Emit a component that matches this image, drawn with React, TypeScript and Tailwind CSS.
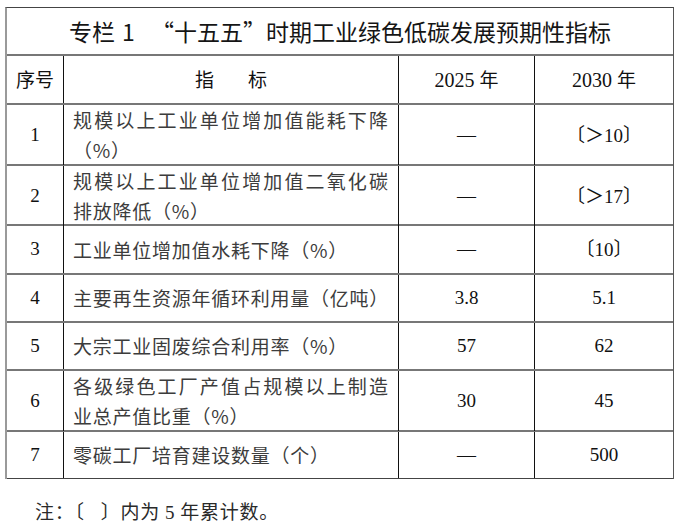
import React from 'react';

const CJK = "font-['Noto_Sans_CJK_SC',sans-serif]";
const SERIF = "font-['Liberation_Serif','Noto_Sans_CJK_SC',serif]";

type Row = {
  no: string;
  lines: string[];
  justifyFirst?: boolean;
  h: string;
  y2025: React.ReactNode;
  y2030: React.ReactNode;
};

const Dash = () => <span className={SERIF}>—</span>;

const Bracket = ({ children }: { children: React.ReactNode }) => (
  <span>
    <span className={CJK}>〔</span>
    {children}
    <span className={CJK}>〕</span>
  </span>
);

const ROWS: Row[] = [
  {
    no: '1',
    lines: ['规模以上工业单位增加值能耗下降', '（%）'],
    justifyFirst: true,
    h: 'h-[61px]',
    y2025: <Dash />,
    y2030: (
      <Bracket>
        <span className={CJK}>＞</span>10
      </Bracket>
    ),
  },
  {
    no: '2',
    lines: ['规模以上工业单位增加值二氧化碳', '排放降低（%）'],
    justifyFirst: true,
    h: 'h-[60px]',
    y2025: <Dash />,
    y2030: (
      <Bracket>
        <span className={CJK}>＞</span>17
      </Bracket>
    ),
  },
  {
    no: '3',
    lines: ['工业单位增加值水耗下降（%）'],
    h: 'h-[49px]',
    y2025: <Dash />,
    y2030: <Bracket>10</Bracket>,
  },
  {
    no: '4',
    lines: ['主要再生资源年循环利用量（亿吨）'],
    h: 'h-[48px]',
    y2025: '3.8',
    y2030: '5.1',
  },
  {
    no: '5',
    lines: ['大宗工业固废综合利用率（%）'],
    h: 'h-[48px]',
    y2025: '57',
    y2030: '62',
  },
  {
    no: '6',
    lines: ['各级绿色工厂产值占规模以上制造', '业总产值比重（%）'],
    justifyFirst: true,
    h: 'h-[61px]',
    y2025: '30',
    y2030: '45',
  },
  {
    no: '7',
    lines: ['零碳工厂培育建设数量（个）'],
    h: 'h-[47px]',
    y2025: <Dash />,
    y2030: '500',
  },
];

const GRID = 'grid grid-cols-[57px_335px_136px_138px]';

export default function App() {
  return (
    <div className="w-[680px] h-[529px] bg-white pt-[7px] pl-[5px] overflow-hidden">
      <div className="w-[669px] border-t border-t-[#444] border-l-2 border-l-[#9a9a9a] border-r border-r-[#555]">
        {/* Title */}
        <div className={`h-[48px] flex items-center justify-center border-b-2 border-b-[#777] ${CJK} text-[23px] font-normal text-[#151515]`}>
          专栏<span className="ml-[7px]">1</span>
          <span className="ml-[16px]">“十五五”时期工业绿色低碳发展预期性指标</span>
        </div>

        {/* Header */}
        <div className={`${GRID} h-[49px] border-b-2 border-b-[#777] text-[19px] text-[#111]`}>
          <div className={`flex items-center justify-center border-r border-r-[#111] ${CJK}`}>序号</div>
          <div className={`flex items-center justify-center border-r border-r-[#111] ${CJK}`}>
            指<span className="ml-[34px]">标</span>
          </div>
          <div className="flex items-center justify-center border-r border-r-[#111]">
            <span className={`${SERIF} text-[20px]`}>2025</span>
            <span className={`${CJK} ml-[5px]`}>年</span>
          </div>
          <div className="flex items-center justify-center">
            <span className={`${SERIF} text-[20px]`}>2030</span>
            <span className={`${CJK} ml-[5px]`}>年</span>
          </div>
        </div>

        {ROWS.map((r, i) => (
          <div
            key={r.no}
            className={`${GRID} ${r.h} ${i === ROWS.length - 1 ? 'border-b border-b-[#444]' : 'border-b-2 border-b-[#777]'}`}
          >
            <div className={`flex items-center justify-center border-r border-r-[#111] ${SERIF} text-[19px] text-[#111]`}>
              {r.no}
            </div>
            <div className={`flex flex-col justify-center pl-[9px] pr-[10px] border-r border-r-[#111] ${CJK} text-[19px] leading-[30px] tracking-[0.75px] text-[#3c3c3c]`}>
              {r.lines.map((l, j) => (
                <div
                  key={j}
                  className={j === 0 && r.justifyFirst ? 'text-justify [text-align-last:justify] tracking-normal' : ''}
                >
                  {l}
                </div>
              ))}
            </div>
            <div className={`flex items-center justify-center border-r border-r-[#111] ${SERIF} text-[19px] text-[#111]`}>
              {r.y2025}
            </div>
            <div className={`flex items-center justify-center ${SERIF} text-[19px] text-[#111]`}>
              {r.y2030}
            </div>
          </div>
        ))}
      </div>

      <div className={`mt-[17px] pl-[30px] ${CJK} text-[19px] leading-[30px] tracking-[0.75px] text-[#2a2a2a]`}>
        注：〔<span className="ml-[16px]">〕</span>内为 <span className={SERIF}>5</span> 年累计数。
      </div>
    </div>
  );
}
